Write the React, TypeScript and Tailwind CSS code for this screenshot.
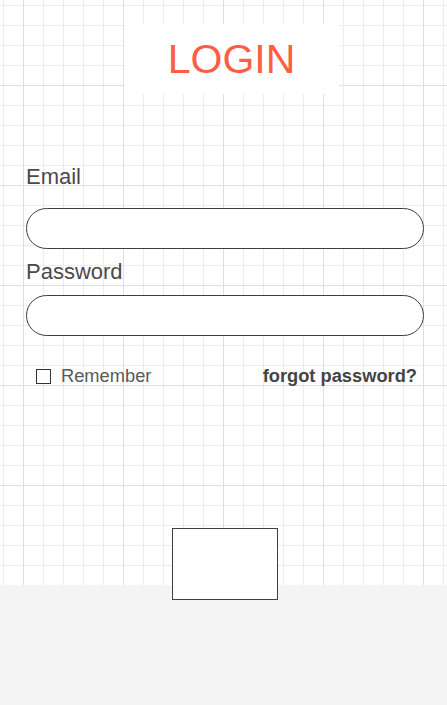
const App = () => {
  return (
    <div className="flex min-h-[705px] w-full flex-col font-['Liberation_Sans',Arial,sans-serif]">
      <div className="flex h-[585px] shrink-0 flex-col bg-white bg-[linear-gradient(to_right,#dfdfdf_1px,transparent_1px),linear-gradient(to_bottom,#dfdfdf_1px,transparent_1px),linear-gradient(to_right,#ececec_1px,transparent_1px),linear-gradient(to_bottom,#ececec_1px,transparent_1px)] bg-size-[100px_100px,100px_100px,20px_20px,20px_20px] bg-position-[23px_85px,23px_85px,3px_5px,3px_5px] *:shrink-0">
        <div className="ml-[124px] mt-[24px] flex h-[70px] w-[215px] items-center justify-center bg-white">
          <h1 className="text-[41px] leading-none text-[#ff5e44]">LOGIN</h1>
        </div>

        <label className="ml-[26px] mt-[70px] text-[22px] leading-[26px] text-[#4a4a4a]">Email</label>
        <div className="ml-[26px] mt-[18px] h-[41px] w-[398px] rounded-full border border-[#3d3d3d] bg-white" />

        <label className="ml-[26px] mt-[10px] text-[22px] leading-[26px] text-[#4a4a4a]">Password</label>
        <div className="ml-[26px] mt-[10px] h-[41px] w-[398px] rounded-full border border-[#3d3d3d] bg-white" />

        <div className="ml-[36px] mr-[30px] mt-[29px] flex h-[22px] items-center justify-between">
          <div className="flex items-center gap-[10px]">
            <span className="h-[15px] w-[15px] border border-[#333333] bg-white" />
            <span className="text-[18.3px] leading-[22px] text-[#595959]">Remember</span>
          </div>
          <span className="text-[18.3px] font-bold leading-[22px] text-[#444444]">forgot password?</span>
        </div>

        <div className="relative z-10 ml-[172px] mt-[141px] h-[72px] w-[106px] border-[1.5px] border-[#3f3f3f] bg-white" />
      </div>
      <div className="flex-1 bg-[#f4f4f4]" />
    </div>
  );
};

export default App;
